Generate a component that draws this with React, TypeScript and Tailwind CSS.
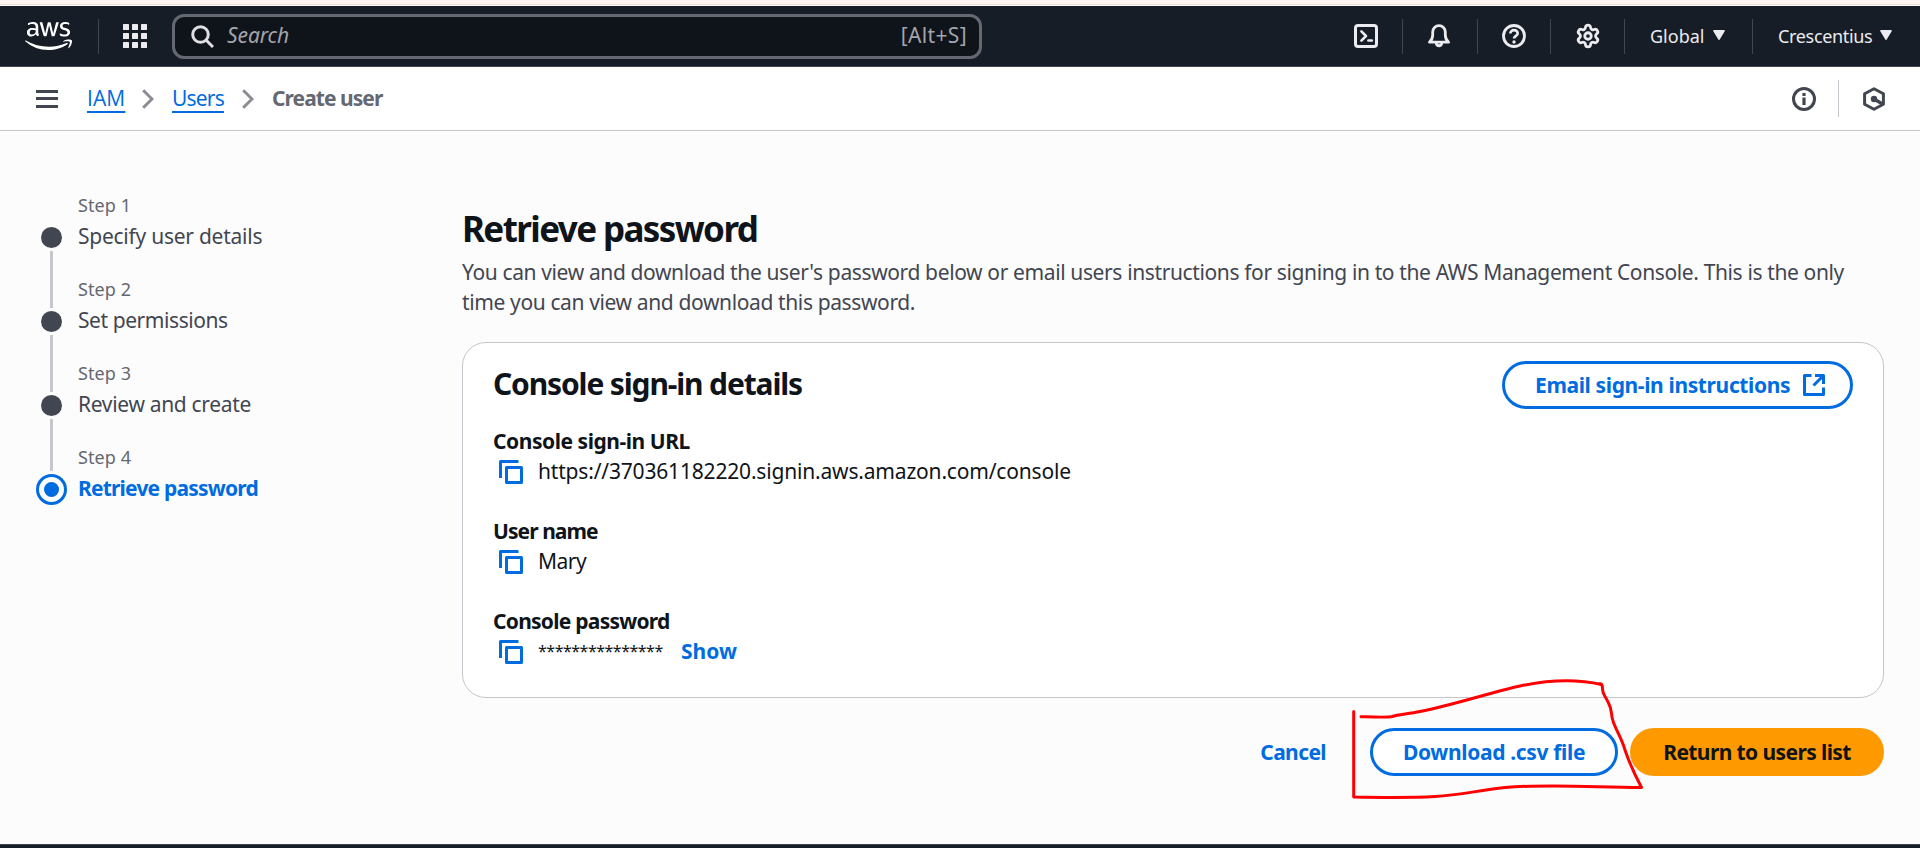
import type { ReactNode } from "react";
import { FaAws } from "react-icons/fa";
import { Settings } from "lucide-react";

const TerminalIcon = () => (
  <svg width="24" height="24" viewBox="0 0 24 24" fill="none" stroke="currentColor" strokeWidth="3" strokeLinejoin="round" strokeLinecap="round">
    <rect x="1.5" y="1.5" width="21" height="21" rx="2.5" />
    <path d="M7.4 7.4 12 12l-4.6 4.6" strokeWidth="2.6" />
    <path d="M14.4 16.5h3.4" strokeWidth="2.6" />
  </svg>
);

const BellIcon = () => (
  <svg width="24" height="24" viewBox="0 0 24 24" fill="none" stroke="currentColor" strokeWidth="2.8" strokeLinejoin="round" strokeLinecap="round">
    <path d="M2.4 18.2h19.2c-2.2-1.9-3.3-4-3.3-7.2V8a6.3 6.3 0 0 0-12.6 0v3c0 3.2-1.1 5.3-3.3 7.2Z" />
    <path d="M9.3 19.5a2.75 2.75 0 0 0 5.4 0" />
  </svg>
);

const HelpIcon = () => (
  <svg width="24" height="24" viewBox="0 0 24 24" fill="none" stroke="currentColor" strokeWidth="2.8">
    <circle cx="12" cy="12" r="10.5" />
    <path d="M8.3 9.6c0-2 1.6-3.5 3.7-3.5s3.7 1.4 3.7 3.3c0 2.4-3.7 2.5-3.7 5.2" strokeWidth="2.6" />
    <circle cx="12" cy="18" r="1.7" fill="currentColor" stroke="none" />
  </svg>
);

const SearchIcon = () => (
  <svg width="24" height="24" viewBox="0 0 24 24" fill="none" stroke="currentColor" strokeWidth="3">
    <circle cx="10.5" cy="10.5" r="7.8" />
    <path d="m16 16 7 7" />
  </svg>
);

const AppsIcon = () => (
  <svg width="24" height="24" viewBox="0 0 24 24" fill="currentColor">
    {[0, 9, 18].map((y) => [0, 9, 18].map((x) => <rect key={`${x}-${y}`} x={x} y={y} width="6" height="6" rx="0.6" />))}
  </svg>
);

const InfoIcon = () => (
  <svg width="24" height="24" viewBox="0 0 24 24" fill="none" stroke="currentColor" strokeWidth="3">
    <circle cx="12" cy="12" r="10.5" />
    <path d="M12 10.5V18M12 6v3" strokeWidth="3.2" />
  </svg>
);

const AssistantIcon = () => (
  <svg width="24" height="24" viewBox="0 0 24 24" fill="none" stroke="currentColor" strokeWidth="3" strokeLinejoin="round">
    <path d="M12 1.7 21.4 6.8v10.4L12 22.3 2.6 17.2V6.8Z" />
    <path d="m12 12 8.5 5" strokeWidth="3.2" />
    <circle cx="12" cy="12" r="3.2" fill="currentColor" stroke="none" />
  </svg>
);

const CopyIcon = () => (
  <svg width="24" height="24" viewBox="0 0 24 24" fill="none" stroke="currentColor" strokeWidth="3" strokeLinejoin="round">
    <path d="M1.5 18V1.5h18" />
    <rect x="7.5" y="7.5" width="15" height="15" />
  </svg>
);

const ExternalIcon = () => (
  <svg width="22" height="22" viewBox="0 0 22 22" fill="none" stroke="currentColor" strokeWidth="3" strokeLinejoin="round">
    <path d="M8.5 1.5h-7v19h19v-7" />
    <path d="M12 1.5h8.5V10M20 2l-9.5 9.5" />
  </svg>
);

const Chevron = () => (
  <svg width="12" height="20" viewBox="0 0 12 20" fill="none" stroke="#8c8c94" strokeWidth="3">
    <path d="m1.2 1.2 8.8 8.8-8.8 8.8" />
  </svg>
);

const Caret = () => (
  <svg width="12" height="10" viewBox="0 0 12 10" fill="currentColor">
    <path d="M1 0h10a.8.8 0 0 1 .7 1.3L6.7 9.6a.8.8 0 0 1-1.4 0L.3 1.3A.8.8 0 0 1 1 0Z" />
  </svg>
);

const NavDivider = () => <div className="h-[35px] w-px bg-[#424650]" />;

function TopNav() {
  return (
    <header className="flex h-[61px] items-center border-b border-[#424650] bg-[#161d26] text-[#ebebf0]">
      <FaAws className="ml-[25px] h-[38px] w-[47px] text-white" />
      <div className="ml-[26px] h-[35px] w-px bg-[#424650]" />
      <div className="ml-6">
        <AppsIcon />
      </div>
      <div className="mt-px ml-[25px] flex h-[45px] w-[810px] items-center rounded-xl border-3 border-[#656871] bg-[#0f141a] pr-3 pl-[15px] text-[21px] leading-[30px]">
        <span className="pb-px text-[#dedee3]">
          <SearchIcon />
        </span>
        <span className="ml-[13px] pb-[3px] tracking-[-0.1px] text-[#a4a4ad] italic">Search</span>
        <span className="ml-auto pb-[3px] tracking-[0.35px] text-[#a4a4ad]">[Alt+S]</span>
      </div>
      <div className="ml-auto flex items-center">
        <div className="flex w-[72px] justify-center">
          <TerminalIcon />
        </div>
        <NavDivider />
        <div className="flex w-[74px] justify-center pr-[2px]">
          <BellIcon />
        </div>
        <NavDivider />
        <div className="flex w-[72px] justify-center">
          <HelpIcon />
        </div>
        <NavDivider />
        <div className="flex w-[73px] justify-center">
          <Settings size={26} strokeWidth={2.6} />
        </div>
        <NavDivider />
        <div className="flex w-[127px] items-center pb-px pl-[25px] text-[18px] leading-6">
          <span>Global</span>
          <span className="ml-[9px] pb-px">
            <Caret />
          </span>
        </div>
        <NavDivider />
        <div className="flex w-[167px] items-center pb-px pl-[25px] text-[18px] leading-6">
          <span className="tracking-[-0.33px]">Crescentius</span>
          <span className="ml-[8px] pb-px">
            <Caret />
          </span>
        </div>
      </div>
    </header>
  );
}

function Breadcrumbs() {
  return (
    <nav className="flex h-16 items-center border-b border-[#c6c6cd] bg-white pl-9 text-[21px] leading-[30px]">
      <div className="flex w-[22px] flex-col gap-[4.5px]">
        <div className="h-[3px] bg-[#424650]" />
        <div className="h-[3px] bg-[#424650]" />
        <div className="h-[3px] bg-[#424650]" />
      </div>
      <a className="ml-[29px] w-[37px] pb-px font-['Open_Sans',sans-serif] tracking-[0.1px] whitespace-nowrap text-[#006ce0] underline decoration-2 underline-offset-[5px]">IAM</a>
      <span className="ml-[18px]">
        <Chevron />
      </span>
      <a className="ml-[18px] w-[52px] pb-px tracking-[-0.8px] whitespace-nowrap text-[#006ce0] underline decoration-2 underline-offset-[5px]">Users</a>
      <span className="ml-[18px]">
        <Chevron />
      </span>
      <span className="ml-[18px] pb-px font-bold tracking-[-0.95px] text-[#656871]">Create user</span>
      <div className="ml-auto flex items-center text-[#424650]">
        <InfoIcon />
        <div className="ml-[22px] h-[37px] w-px bg-[#c6c6cd]" />
        <div className="mr-[34px] ml-[23px]">
          <AssistantIcon />
        </div>
      </div>
    </nav>
  );
}

const steps = [
  { label: "Step 1", title: "Specify user details", tracking: "tracking-[-0.25px]" },
  { label: "Step 2", title: "Set permissions", tracking: "tracking-[-0.43px]" },
  { label: "Step 3", title: "Review and create", tracking: "tracking-[-0.32px]" },
  { label: "Step 4", title: "Retrieve password", tracking: "tracking-[-0.8px]" },
];

function Steps() {
  return (
    <ol className="mt-[61px] ml-9 w-[426px] shrink-0">
      {steps.map((s, i) => {
        const active = i === steps.length - 1;
        return (
          <li key={s.label} className="flex h-[84px]">
            <div className="flex w-[31px] flex-col items-center">
              {active ? (
                <>
                  <div className="h-[27px] w-[3px] bg-[#c6c6cd]" />
                  <div className="mt-[3px] flex size-[31px] items-center justify-center rounded-full border-3 border-[#006ce0] bg-white">
                    <div className="size-[15px] rounded-full bg-[#006ce0]" />
                  </div>
                </>
              ) : (
                <>
                  <div className={i === 0 ? "h-8 w-[3px]" : "h-8 w-[3px] bg-[#c6c6cd]"} />
                  <div className="my-[3px] size-[21px] shrink-0 rounded-full bg-[#424650]" />
                  <div className="w-[3px] grow bg-[#c6c6cd]" />
                </>
              )}
            </div>
            <div className="ml-[11px]">
              <div className="text-[18px] leading-[26px] tracking-[0.1px] text-[#656871]">{s.label}</div>
              <div className={`mt-[3px] text-[21px] leading-[30px] ${s.tracking} ${active ? "font-bold text-[#006ce0]" : "text-[#424650]"}`}>{s.title}</div>
            </div>
          </li>
        );
      })}
    </ol>
  );
}

function Field({ label, children, className }: { label: string; children: ReactNode; className: string }) {
  return (
    <div className="text-[21px] leading-[30px]">
      <div className={`font-bold ${className}`}>{label}</div>
      <div className="flex items-center">
        <span className="mr-[15px] ml-[6px] pt-[2px] text-[#006ce0]">
          <CopyIcon />
        </span>
        {children}
      </div>
    </div>
  );
}

function Annotation() {
  return (
    <svg className="pointer-events-none absolute top-[670px] left-[1340px]" width="320" height="140" viewBox="1340 670 320 140" fill="none" stroke="#ff0000" strokeWidth="3" strokeLinecap="round" strokeLinejoin="round">
      <path d="M1353.7 711.5V797C1380 797.500 1410 798 1435 796.500S1475 791 1505 787.500C1545 784 1590 787 1641.500 787.500C1636 777 1630 765 1625 750C1622 739 1617 732 1613.500 722.500C1610 714 1613 711 1608.500 703C1605 695 1602 694 1602.500 688Q1602.500 684 1600 683.700" />
      <path d="M1361 716.700C1372 717 1388 717.700 1392 716.500C1398 714.500 1408 714 1420 711.500C1455 704.500 1490 692.500 1520 686C1548 680 1575 678.500 1601.500 684.500" />
    </svg>
  );
}

export default function App() {
  return (
    <div className="relative flex h-[848px] w-[1920px] flex-col overflow-hidden bg-[#fcfcfd] font-['Noto_Sans',sans-serif] text-[#0f141a]">
      <div className="h-[6px] shrink-0 border-b border-white bg-[#fff5f2] pt-1">
        <div className="h-px bg-[#f8dcd4]" />
      </div>
      <TopNav />
      <Breadcrumbs />
      <div className="flex grow">
        <Steps />
        <main className="w-[1422px] pt-[76px]">
          <h1 className="text-[35px] leading-[44px] font-bold tracking-[-1.6px]">Retrieve password</h1>
          <p className="mt-[6px] text-[21px] leading-[30px] tracking-[-0.375px] text-[#424650]">
            You can view and download the user's password below or email users instructions for signing in to the AWS Management Console. This is the only
            <br />
            time you can view and download this password.
          </p>
          <section className="mt-[25px] h-[356px] rounded-[24px] border border-[#c6c6cd] bg-white pt-[18px] pr-[30px] pl-[30px]">
            <div className="flex items-center justify-between">
              <h2 className="mb-[2px] text-[30px] leading-9 font-bold tracking-[-1.14px]">Console sign-in details</h2>
              <button className="flex h-12 w-[351px] items-center rounded-full border-3 border-[#006ce0] pl-[30px] text-[21px] leading-[30px] font-bold text-[#006ce0]">
                <span className="pb-px tracking-[-0.37px] whitespace-nowrap">Email sign-in instructions</span>
                <span className="mr-[25px] ml-auto">
                  <ExternalIcon />
                </span>
              </button>
            </div>
            <div className="mt-[17px] flex flex-col gap-[30px]">
              <Field label="Console sign-in URL" className="tracking-[-0.45px]">
                <span className="tracking-[-0.18px]">https://370361182220.signin.aws.amazon.com/console</span>
              </Field>
              <Field label="User name" className="tracking-[-0.93px]">
                <span className="tracking-[-0.5px]">Mary</span>
              </Field>
              <Field label="Console password" className="tracking-[-0.74px]">
                <span className="w-[143px] text-[16px] tracking-[-0.5px]">***************</span>
                <span className="font-bold text-[#006ce0]">Show</span>
              </Field>
            </div>
          </section>
          <div className="mt-[30px] flex items-center justify-end text-[21px] leading-[30px] font-bold">
            <button className="mr-[44px] pb-px tracking-[-0.6px] text-[#006ce0]">Cancel</button>
            <button className="h-12 w-[248px] rounded-full border-3 border-[#006ce0] bg-white pb-px tracking-[-0.34px] text-[#006ce0]">Download .csv file</button>
            <button className="ml-3 h-12 w-[254px] rounded-full bg-[#ff9900] pb-px tracking-[-0.6px]">Return to users list</button>
          </div>
        </main>
      </div>
      <div className="h-1 shrink-0 border-t border-[#424650] bg-[#161d26]" />
      <Annotation />
    </div>
  );
}
